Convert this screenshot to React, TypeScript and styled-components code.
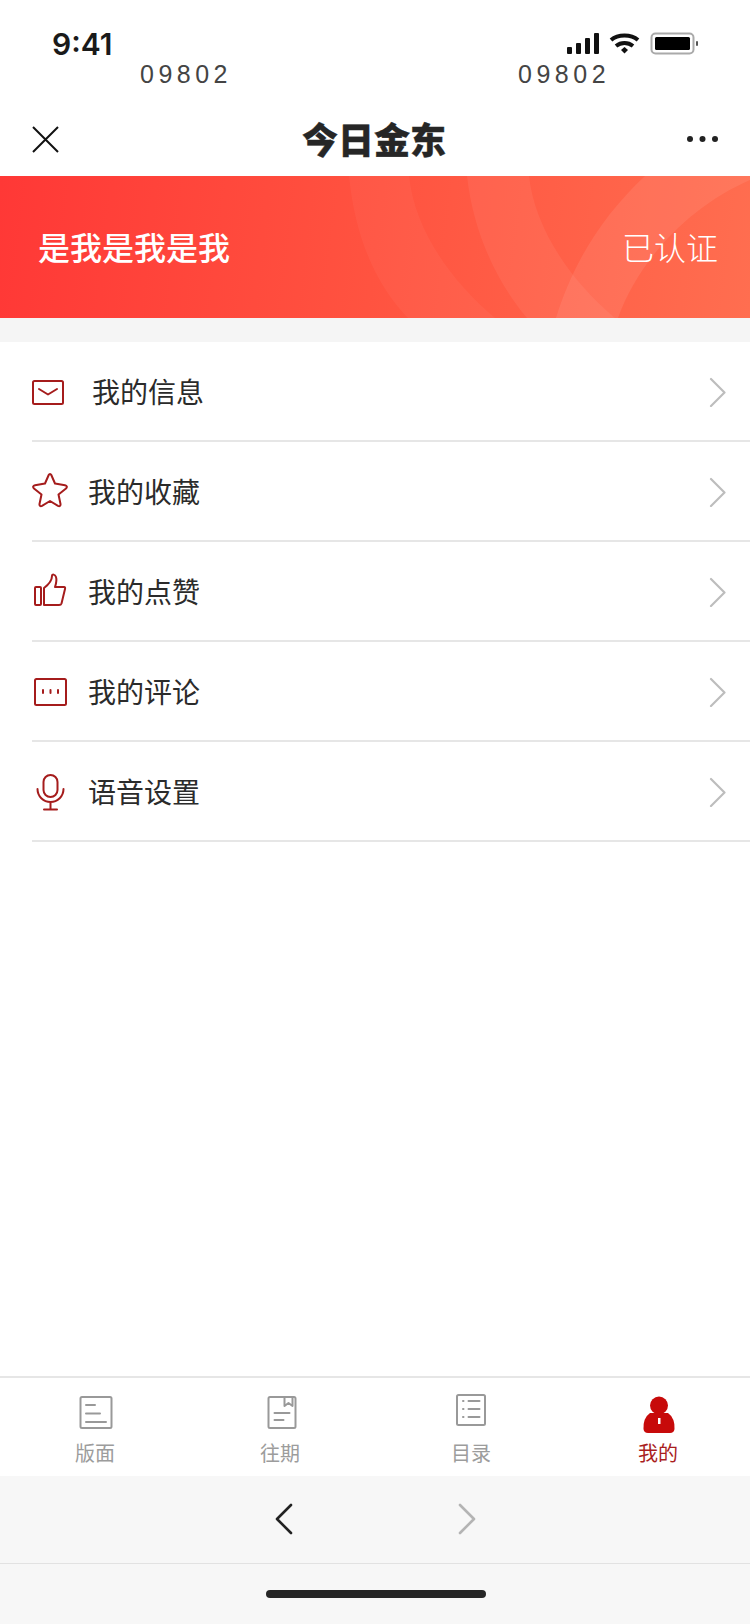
import React from "react";
import styled, { createGlobalStyle } from "styled-components";

const CJK = `"Noto Sans CJK SC", "Noto Sans", sans-serif`;
const RED = "#a51c1c";

const GlobalStyle = createGlobalStyle`
    html, body {
        margin: 0;
        padding: 0;
        background: #fff;
    }
    * {
        box-sizing: border-box;
    }
`;

const Page = styled.div`
    width: 750px;
    height: 1624px;
    display: flex;
    flex-direction: column;
    overflow: hidden;
    background: #fff;
    font-family: ${CJK};
`;

const StatusBar = styled.div`
    height: 104px;
    padding: 33px 50px 0 52px;
    flex-shrink: 0;
`;

const StatusRow = styled.div`
    height: 22px;
    display: flex;
    justify-content: space-between;
    align-items: center;
`;

const Time = styled.span`
    font-family: Inter, "Liberation Sans", sans-serif;
    font-size: 30px;
    font-weight: 600;
    color: #1a1a1a;
`;

const StatusIcons = styled.svg`
    display: block;
    width: 134px;
    height: 24px;
`;

const CodeRow = styled.div`
    display: flex;
    gap: 286px;
    padding: 9px 0 0 88px;
`;

const Code = styled.span`
    font-family: "Liberation Sans", sans-serif;
    font-size: 25px;
    font-weight: 400;
    line-height: 20px;
    letter-spacing: 4.5px;
    color: #444;
`;

const NavBar = styled.div`
    height: 72px;
    padding: 0 31px 2px 32px;
    display: flex;
    justify-content: space-between;
    align-items: center;
    flex-shrink: 0;
`;

const NavIcon = styled.svg`
    display: block;
    width: 32px;
    height: 32px;
`;

const Logo = styled.span`
    margin: 0 3px 2px 0;
    font-size: 36px;
    font-weight: 900;
    line-height: 40px;
    color: #262626;
    -webkit-text-stroke: 0.4px #262626;
`;

const Banner = styled.div`
    position: relative;
    height: 142px;
    padding: 0 32px 2px 38px;
    display: flex;
    justify-content: space-between;
    align-items: center;
    flex-shrink: 0;
    overflow: hidden;
    background: linear-gradient(97deg, #ff3836 0%, #ff5340 50%, #ff6e50 100%);
`;

const BannerArt = styled.svg`
    position: absolute;
    left: 0;
    top: 0;
    width: 750px;
    height: 142px;
`;

const BannerName = styled.span`
    position: relative;
    font-size: 32px;
    font-weight: 500;
    color: #fff;
`;

const BannerState = styled.span`
    position: relative;
    font-size: 32px;
    font-weight: 300;
    color: #fff;
`;

const Gap = styled.div`
    height: 24px;
    background: #f5f5f5;
    flex-shrink: 0;
`;

const List = styled.div`
    flex: 1;
    display: flex;
    flex-direction: column;
`;

const Row = styled.div`
    height: 100px;
    margin-left: 32px;
    padding-right: 23px;
    display: flex;
    align-items: center;
    border-bottom: 2px solid #e6e6e6;
`;

const RowIconSlot = styled.div<{ $width: number }>`
    width: ${(p) => p.$width}px;
    flex-shrink: 0;
`;

const RowIcon = styled.svg`
    display: block;
    width: 40px;
    height: 40px;
    fill: none;
    stroke: ${RED};
    stroke-width: 2;
    stroke-linecap: round;
    stroke-linejoin: round;
`;

const RowLabel = styled.span`
    flex: 1;
    font-size: 28px;
    line-height: 40px;
    color: #2b2b2b;
`;

const Chevron = styled.svg`
    display: block;
    width: 18px;
    height: 32px;
    fill: none;
    stroke: #bdbdbd;
    stroke-width: 2.2;
    stroke-linecap: round;
    stroke-linejoin: round;
`;

const TabBar = styled.div`
    height: 100px;
    display: grid;
    grid-template-columns: 190px 180px 202px 172px;
    border-top: 2px solid #e6e6e6;
    flex-shrink: 0;
`;

const Tab = styled.div`
    display: flex;
    flex-direction: column;
    align-items: center;
    padding-top: 15px;
`;

const TabIcon = styled.svg`
    display: block;
    width: 40px;
    height: 40px;
    fill: none;
    stroke: #999;
    stroke-width: 2;
    stroke-linecap: round;
    stroke-linejoin: round;
`;

const TabLabel = styled.span<{ $active?: boolean }>`
    margin-top: 6px;
    font-size: 20px;
    line-height: 28px;
    color: ${(p) => (p.$active ? "#a91d1d" : "#9c9c9c")};
`;

const BrowserBar = styled.div`
    height: 88px;
    padding: 0 0 2px 0;
    display: flex;
    justify-content: center;
    align-items: center;
    gap: 165px;
    background: #f7f7f7;
    border-bottom: 1px solid #e2e2e2;
    flex-shrink: 0;
`;

const BrowserArrow = styled.svg<{ $on?: boolean }>`
    display: block;
    width: 18px;
    height: 32px;
    fill: none;
    stroke: ${(p) => (p.$on ? "#222" : "#b4b4b4")};
    stroke-width: 2.6;
    stroke-linecap: round;
    stroke-linejoin: round;
`;

const HomeArea = styled.div`
    height: 60px;
    padding: 26px 0 0 2px;
    display: flex;
    justify-content: center;
    background: #f7f7f7;
    flex-shrink: 0;
`;

const HomeBar = styled.div`
    width: 220px;
    height: 8px;
    border-radius: 4px;
    background: #262626;
`;

const menu = [
    {
        label: "我的信息",
        slot: 60,
        icon: (
            <>
                <rect x="1" y="10" width="30" height="23" rx="1.5" />
                <path d="M7 18 L16 23.5 L25 18" />
            </>
        ),
    },
    {
        label: "我的收藏",
        slot: 56,
        icon: <path d="M18 3 C18.600 3 19 3.400 19.300 4 L23 12.500 L33 14.200 C35 14.600 35.500 16 34 17.500 L26.500 23.500 L28.500 33 C28.800 35 27.500 35.600 26 34.800 L18 30 L10 34.800 C8.500 35.600 7.200 35 7.500 33 L9.500 23.500 L2 17.500 C0.500 16 1 14.600 3 14.200 L13 12.500 L16.700 4 C17 3.400 17.400 3 18 3 Z" />,
    },
    {
        label: "我的点赞",
        slot: 56,
        icon: (
            <>
                <rect x="3" y="16" width="6" height="18" rx="1" />
                <path d="M12 34 L12 17 C16 14 20 10 20 5 C20 3 23 3 24 6 C25 9 24 13 23 16 L32 16 Q33.500 16 33 18 L29.500 32.500 Q29 34 27 34 Z" />
            </>
        ),
    },
    {
        label: "我的评论",
        slot: 56,
        icon: (
            <>
                <rect x="3" y="8" width="31" height="26" rx="1.500" />
                <path d="M11 19 V22 M18.500 19 V22 M26 19 V22" />
            </>
        ),
    },
    {
        label: "语音设置",
        slot: 56,
        icon: (
            <>
                <rect x="11.500" y="4" width="14" height="22" rx="7" />
                <path d="M5.500 18 a13 13 0 0 0 26 0 M18.500 31 V38.500 M12 38.500 H25" />
            </>
        ),
    },
];

const App: React.FC = () => {
    return (
        <Page>
            <GlobalStyle />
            <StatusBar>
                <StatusRow>
                    <Time>9:41</Time>
                    <StatusIcons viewBox="0 0 134 24">
                        <rect x="1" y="15" width="5" height="7" rx="1" fill="#111" />
                        <rect x="10" y="11" width="5" height="11" rx="1" fill="#111" />
                        <rect x="19" y="6" width="5" height="16" rx="1" fill="#111" />
                        <rect x="28" y="1" width="5" height="21" rx="1" fill="#111" />
                        <path d="M45 8 C52 2 65 2 72 8" fill="none" stroke="#111" strokeWidth="4" />
                        <path d="M50 14 C55 10 62 10 67 14" fill="none" stroke="#111" strokeWidth="4" />
                        <path d="M55 18 L58.500 15 L62 18 L58.500 21.500 Z" fill="#111" />
                        <rect x="85.500" y="1.500" width="42" height="20" rx="4" fill="none" stroke="#aaa" strokeWidth="2" />
                        <rect x="89" y="5" width="35" height="13" rx="1.500" fill="#000" />
                        <rect x="130" y="9" width="2" height="5" rx="1" fill="#555" />
                    </StatusIcons>
                </StatusRow>
                <CodeRow>
                    <Code>09802</Code>
                    <Code>09802</Code>
                </CodeRow>
            </StatusBar>

            <NavBar>
                <NavIcon viewBox="0 0 32 32">
                    <path d="M1 4 L26 29 M26 4 L1 29" fill="none" stroke="#111" strokeWidth="2" />
                </NavIcon>
                <Logo>今日金东</Logo>
                <NavIcon viewBox="0 0 32 32">
                    <circle cx="3" cy="16" r="3" fill="#222" />
                    <circle cx="15.500" cy="16" r="3" fill="#222" />
                    <circle cx="28" cy="16" r="3" fill="#222" />
                </NavIcon>
            </NavBar>

            <Banner>
                <BannerArt viewBox="0 0 750 142">
                    <path d="M349 0 C355 60 375 108 408 142 L495 142 C450 104 415 54 409 0 Z" fill="#fff" fillOpacity="0.04" />
                    <path d="M467 0 C473 54 495 104 527 142 L615 142 C572 106 535 54 529 0 Z" fill="#fff" fillOpacity="0.06" />
                    <path d="M645 0 C600 42 572 90 556 142 L618 142 C640 82 690 30 750 4 L750 0 Z" fill="#fff" fillOpacity="0.08" />
                </BannerArt>
                <BannerName>是我是我是我</BannerName>
                <BannerState>已认证</BannerState>
            </Banner>
            <Gap />

            <List>
                {menu.map((item) => (
                    <Row key={item.label}>
                        <RowIconSlot $width={item.slot}>
                            <RowIcon viewBox="0 0 40 40">{item.icon}</RowIcon>
                        </RowIconSlot>
                        <RowLabel>{item.label}</RowLabel>
                        <Chevron viewBox="0 0 18 32">
                            <path d="M2 4 L15.500 17.500 L2 31" />
                        </Chevron>
                    </Row>
                ))}
            </List>

            <TabBar>
                <Tab>
                    <TabIcon viewBox="0 0 40 40">
                        <rect x="5.500" y="4" width="31" height="31" rx="1.500" />
                        <path d="M11 12 H20 M11 20.500 H25 M11 29 H31" />
                    </TabIcon>
                    <TabLabel>版面</TabLabel>
                </Tab>
                <Tab>
                    <TabIcon viewBox="0 0 40 40">
                        <rect x="8.500" y="4" width="27" height="31" rx="1.500" />
                        <path d="M24.500 5 V13 L28.500 10 L32.500 13 V5 M14.500 20 H29.500 M14.500 27 H23.500" />
                    </TabIcon>
                    <TabLabel>往期</TabLabel>
                </Tab>
                <Tab>
                    <TabIcon viewBox="0 0 40 40">
                        <rect x="6" y="2" width="28" height="30" rx="1.500" />
                        <path d="M12 8 H12.500 M12 16 H12.500 M12 24 H12.500 M17.500 8 H28.500 M17.500 16 H28.500 M17.500 24 H28.500" />
                    </TabIcon>
                    <TabLabel>目录</TabLabel>
                </Tab>
                <Tab>
                    <TabIcon viewBox="0 0 40 40" stroke="none">
                        <circle cx="21" cy="12.500" r="9" fill="#c70a0a" stroke="none" />
                        <path d="M5.500 36 Q5 25 12 20 L30 20 Q37 25 36.500 36 Q36 40 32 40 L10 40 Q6 40 5.500 36 Z" fill="#c70a0a" stroke="none" />
                        <rect x="20" y="25" width="2.500" height="6" fill="#fff" stroke="none" />
                    </TabIcon>
                    <TabLabel $active>我的</TabLabel>
                </Tab>
            </TabBar>

            <BrowserBar>
                <BrowserArrow $on viewBox="0 0 18 32">
                    <path d="M16 2 L2 16 L16 30" />
                </BrowserArrow>
                <BrowserArrow viewBox="0 0 18 32">
                    <path d="M2 2 L16 16 L2 30" />
                </BrowserArrow>
            </BrowserBar>
            <HomeArea>
                <HomeBar />
            </HomeArea>
        </Page>
    );
};

export default App;
